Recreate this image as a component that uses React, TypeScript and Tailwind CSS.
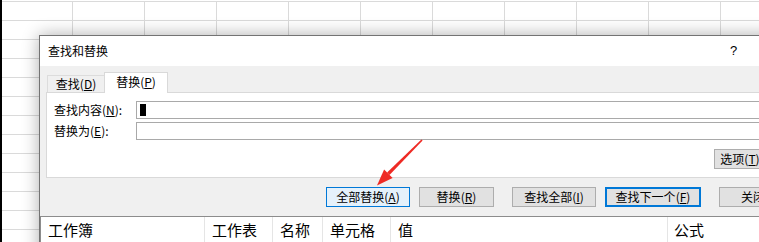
import React from 'react';

const Key = ({ label, k }: { label: string; k: string }) => (
  <>
    {label}(<span className="underline underline-offset-1">{k}</span>)
  </>
);

const rows = Array.from({ length: 13 });
const cols = Array.from({ length: 10 });

const Sheet = () => (
  <div className="flex flex-col border-l-2 border-black">
    <div className="flex h-[2px] border-b border-[#dadada]" />
    {rows.map((_, r) => (
      <div key={r} className="flex h-[19px] shrink-0 border-b border-[#dadada]">
        <div className="w-[71px] shrink-0 border-r border-[#dadada]" />
        {cols.map((_, c) => (
          <div key={c} className="w-[72px] shrink-0 border-r border-[#dadada]" />
        ))}
      </div>
    ))}
  </div>
);

const Button = ({
  className,
  children,
}: {
  className: string;
  children: React.ReactNode;
}) => (
  <div className={`flex h-[20px] shrink-0 items-center justify-center text-[12px] leading-none text-black ${className}`}>
    {children}
  </div>
);

export default function App() {
  return (
    <div className="relative h-[242px] w-[759px] overflow-hidden bg-white font-['Noto_Sans_CJK_SC',sans-serif]">
      <Sheet />

      {/* dialog */}
      <div className="absolute left-[39px] top-[35px] flex h-[240px] w-[780px] flex-col border-l border-t border-[#737373] bg-[#f0f0f0] shadow-[0_0_16px_rgba(0,0,0,0.32)]">
        <div className="flex h-[30px] shrink-0 items-center bg-white pl-[8px] text-[12px] text-black">
          <span className="w-[682px]">查找和替换</span>
          <span className="font-['Liberation_Sans',sans-serif] text-[13px]">?</span>
        </div>

        <div className="ml-[7px] mt-[6px] flex h-[20px] items-end text-[12px] leading-none">
          <div className="flex h-[17px] w-[57px] items-center justify-center border-l border-t border-[#dcdcdc] bg-[#f0f0f0]">
            <Key label="查找" k="D" />
          </div>
          <div className="relative z-10 -mb-px flex h-[21px] w-[64px] items-center justify-center border border-b-0 border-[#d9d9d9] bg-white pb-[2px]">
            <Key label="替换" k="P" />
          </div>
        </div>

        <div className="ml-[6px] flex h-[86px] w-[760px] shrink-0 flex-col border border-[#d9d9d9] bg-white pl-[7px] text-[12px] leading-none">
          <div className="mt-[8px] flex items-center">
            <span className="w-[82px]">
              <Key label="查找内容" k="N" />:
            </span>
            <div className="h-[18px] w-[640px] border border-[#a9a9a9] pl-[3px] pt-[2px]">
              <div className="h-[12px] w-[6px] bg-black" />
            </div>
          </div>
          <div className="mt-[3px] flex items-center">
            <span className="w-[82px]">
              <Key label="替换为" k="E" />:
            </span>
            <div className="h-[18px] w-[640px] border border-[#a9a9a9]" />
          </div>
          <div className="mt-[9px] flex">
            <Button className="ml-[660px] w-[52px] border border-[#adadad] bg-[#e1e1e1]">
              <Key label="选项" k="T" />
            </Button>
          </div>
        </div>

        <div className="mt-[9px] flex pl-[286px]">
          <Button className="w-[84px] border border-[#0078d7] bg-[#e5f1fb]">
            <Key label="全部替换" k="A" />
          </Button>
          <Button className="ml-[9px] w-[75px] border border-[#adadad] bg-[#e1e1e1]">
            <Key label="替换" k="R" />
          </Button>
          <Button className="ml-[18px] w-[84px] border border-[#adadad] bg-[#e1e1e1]">
            <Key label="查找全部" k="I" />
          </Button>
          <Button className="ml-[9px] w-[96px] border-2 border-[#0078d7] bg-[#e1e1e1]">
            <Key label="查找下一个" k="F" />
          </Button>
          <Button className="ml-[18px] w-[68px] border border-[#adadad] bg-[#e1e1e1]">
            关闭
          </Button>
        </div>

        <div className="mt-[9px] flex h-[40px] border-l border-t border-[#8c8c8c] bg-white text-[15px] leading-none text-black">
          <div className="flex h-[25px] w-[164px] items-center border-r border-[#e5e5e5] pl-[7px]">工作簿</div>
          <div className="flex h-[25px] w-[68px] items-center border-r border-[#e5e5e5] pl-[7px]">工作表</div>
          <div className="flex h-[25px] w-[50px] items-center border-r border-[#e5e5e5] pl-[7px]">名称</div>
          <div className="flex h-[25px] w-[68px] items-center border-r border-[#e5e5e5] pl-[7px]">单元格</div>
          <div className="flex h-[25px] w-[277px] items-center border-r border-[#e5e5e5] pl-[7px]">值</div>
          <div className="flex h-[25px] w-[100px] items-center pl-[6px]">公式</div>
        </div>
      </div>

      {/* red arrow */}
      <svg className="pointer-events-none absolute left-0 top-0" width="759" height="242" viewBox="0 0 759 242">
        <polygon points="422.6,140.4 421.4,139.6 387.1,172.5 389.5,174.9" fill="#ee2a24" />
        <polygon points="377,185.5 392.6,177.9 384.1,169.4" fill="#ee2a24" />
      </svg>
    </div>
  );
}
